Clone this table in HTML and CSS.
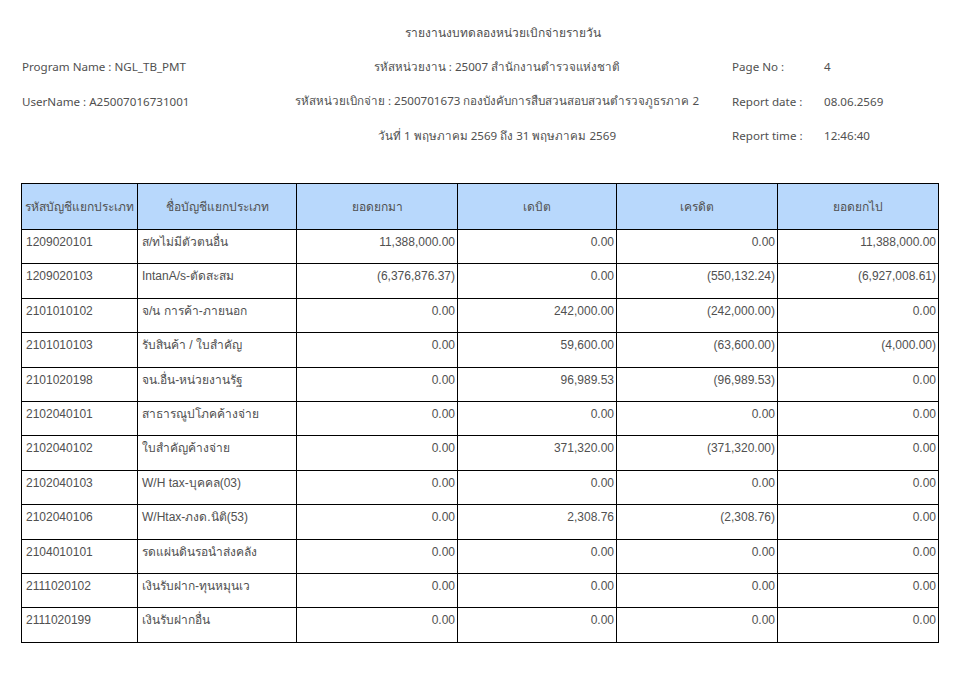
FILE: index.html
```html
<!DOCTYPE html>
<html lang="th">
<head>
<meta charset="utf-8">
<title>รายงานงบทดลองหน่วยเบิกจ่ายรายวัน</title>
<link rel="stylesheet" href="styles.css">
</head>
<body>
<div class="page">
  <header class="meta">
    <div class="title">รายงานงบทดลองหน่วยเบิกจ่ายรายวัน</div>

    <div class="c1">Program Name : NGL_TB_PMT</div>
    <div class="c2">รหัสหน่วยงาน : 25007 สำนักงานตำรวจแห่งชาติ</div>
    <div class="c3">Page No :</div>
    <div class="c4">4</div>

    <div class="c1">UserName : A25007016731001</div>
    <div class="c2">รหัสหน่วยเบิกจ่าย : 2500701673 กองบังคับการสืบสวนสอบสวนตำรวจภูธรภาค 2</div>
    <div class="c3">Report date :</div>
    <div class="c4">08.06.2569</div>

    <div class="c1"></div>
    <div class="c2">วันที่ 1 พฤษภาคม 2569 ถึง 31 พฤษภาคม 2569</div>
    <div class="c3">Report time :</div>
    <div class="c4">12:46:40</div>
  </header>

  <table class="tb">
    <colgroup>
      <col class="w-code"><col class="w-name"><col class="w-num"><col class="w-num2"><col class="w-num"><col class="w-num">
    </colgroup>
    <thead>
      <tr>
        <th>รหัสบัญชีแยกประเภท</th>
        <th>ชื่อบัญชีแยกประเภท</th>
        <th>ยอดยกมา</th>
        <th>เดบิต</th>
        <th>เครดิต</th>
        <th>ยอดยกไป</th>
      </tr>
    </thead>
    <tbody>
      <tr><td>1209020101</td><td>ส/ทไม่มีตัวตนอื่น</td><td class="n">11,388,000.00</td><td class="n">0.00</td><td class="n">0.00</td><td class="n">11,388,000.00</td></tr>
      <tr><td>1209020103</td><td>IntanA/s-ตัดสะสม</td><td class="n">(6,376,876.37)</td><td class="n">0.00</td><td class="n">(550,132.24)</td><td class="n">(6,927,008.61)</td></tr>
      <tr><td>2101010102</td><td>จ/น การค้า-ภายนอก</td><td class="n">0.00</td><td class="n">242,000.00</td><td class="n">(242,000.00)</td><td class="n">0.00</td></tr>
      <tr><td>2101010103</td><td>รับสินค้า / ใบสำคัญ</td><td class="n">0.00</td><td class="n">59,600.00</td><td class="n">(63,600.00)</td><td class="n">(4,000.00)</td></tr>
      <tr><td>2101020198</td><td>จน.อื่น-หน่วยงานรัฐ</td><td class="n">0.00</td><td class="n">96,989.53</td><td class="n">(96,989.53)</td><td class="n">0.00</td></tr>
      <tr><td>2102040101</td><td>สาธารณูปโภคค้างจ่าย</td><td class="n">0.00</td><td class="n">0.00</td><td class="n">0.00</td><td class="n">0.00</td></tr>
      <tr><td>2102040102</td><td>ใบสำคัญค้างจ่าย</td><td class="n">0.00</td><td class="n">371,320.00</td><td class="n">(371,320.00)</td><td class="n">0.00</td></tr>
      <tr><td>2102040103</td><td>W/H tax-บุคคล(03)</td><td class="n">0.00</td><td class="n">0.00</td><td class="n">0.00</td><td class="n">0.00</td></tr>
      <tr><td>2102040106</td><td>W/Htax-ภงด.นิติ(53)</td><td class="n">0.00</td><td class="n">2,308.76</td><td class="n">(2,308.76)</td><td class="n">0.00</td></tr>
      <tr><td>2104010101</td><td>รดแผ่นดินรอนำส่งคลัง</td><td class="n">0.00</td><td class="n">0.00</td><td class="n">0.00</td><td class="n">0.00</td></tr>
      <tr><td>2111020102</td><td>เงินรับฝาก-ทุนหมุนเว</td><td class="n">0.00</td><td class="n">0.00</td><td class="n">0.00</td><td class="n">0.00</td></tr>
      <tr><td>2111020199</td><td>เงินรับฝากอื่น</td><td class="n">0.00</td><td class="n">0.00</td><td class="n">0.00</td><td class="n">0.00</td></tr>
    </tbody>
  </table>
</div>
</body>
</html>
```

FILE: styles.css
```css
html, body {
  margin: 0;
  padding: 0;
  background: #ffffff;
}

body {
  font-family: "Noto Sans", "DejaVu Sans", sans-serif;
  font-size: 11.6px;
  color: #505050;
}

.page {
  padding: 15px 0 0 21px;
  width: 918px;
}

.meta {
  display: grid;
  grid-template-columns: 241px 470px 92px 1fr;
  grid-auto-rows: 34.5px;
  align-items: center;
}

.title {
  grid-column: 1 / -1;
  text-align: center;
  white-space: nowrap;
  font-size: 12px;
  padding-left: 46px;
}

.c1 { grid-column: 1; padding-left: 1px; }
.c2 { grid-column: 2; text-align: center; white-space: nowrap; }
.c3 { grid-column: 3; }
.c4 { grid-column: 4; }

.tb {
  margin-top: 30px;
  border-collapse: collapse;
  table-layout: fixed;
  width: 918px;
  font-family: "Liberation Sans", "Noto Sans", sans-serif;
  font-size: 12px;
  color: #505050;
}

.w-code { width: 116px; }
.w-name { width: 159px; }
.w-num  { width: 161px; }
.w-num2 { width: 159px; }

.tb th,
.tb td {
  border: 1px solid #000;
}

.tb th {
  background: #b8d8fc;
  font-weight: normal;
  height: 45px;
  text-align: center;
  padding: 0 3px;
  white-space: nowrap;
}

.tb td {
  height: 34.4px;
  box-sizing: border-box;
  padding: 2px 3px 0 4px;
  vertical-align: top;
  line-height: 20px;
  white-space: nowrap;
  overflow: hidden;
}

.tb td.n {
  text-align: right;
  padding-right: 2px;
}
```
